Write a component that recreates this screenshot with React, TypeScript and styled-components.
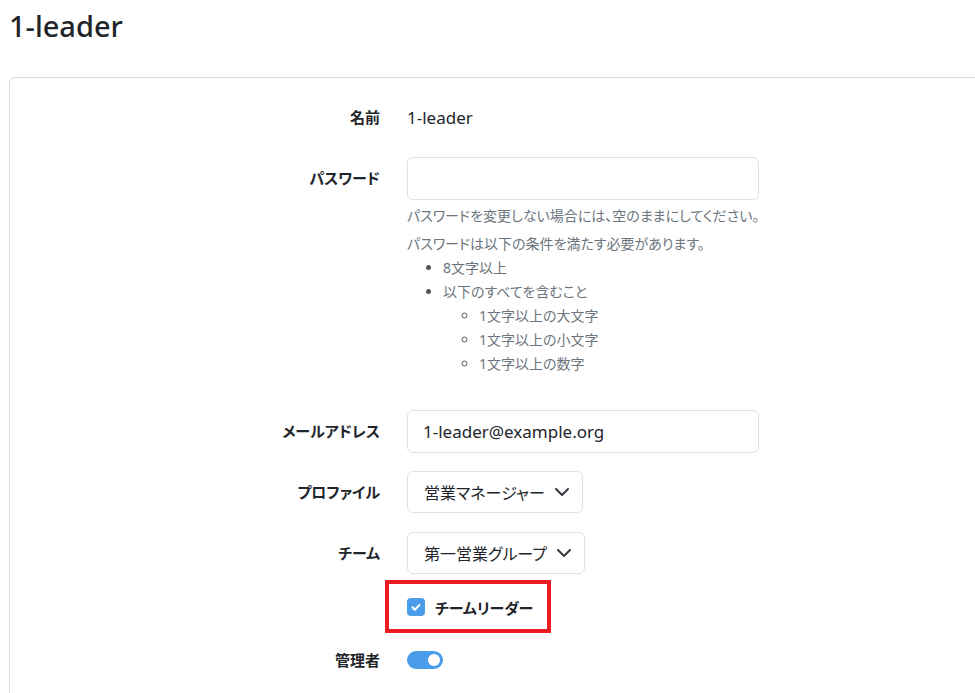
import React from 'react';
import styled, { createGlobalStyle } from 'styled-components';

const GlobalStyle = createGlobalStyle`
	html, body {
		margin: 0;
		overflow: hidden;
		background: #fff;
	}

	body {
		font-family: "Noto Sans", "Noto Sans CJK JP", sans-serif;
		font-feature-settings: "palt";
		color: #212529;
	}
`;

const Page = styled.main`
	width: 1200px;
	padding: 8px 9px;
`;

const Title = styled.h2`
	margin: 0 0 33px;
	font-size: 29px;
	font-weight: 500;
	line-height: 36px;
`;

const Card = styled.section`
	border: 1px solid #dcdcdc;
	border-radius: 6px;
	padding: 18px 0 40px;
`;

const FormRow = styled.div<{ $height?: number }>`
	display: grid;
	grid-template-columns: 370px 1fr;
	column-gap: 27px;
	align-items: start;
	margin-bottom: 18px;
	min-height: ${props => props.$height ?? 43}px;
`;

const Label = styled.div`
	text-align: right;
	font-size: 15px;
	font-weight: 700;
	line-height: 43px;
`;

const Field = styled.div`
	position: relative;
	display: flex;
	flex-direction: column;
	align-items: flex-start;
`;

const StaticValue = styled.div`
	font-size: 17px;
	line-height: 43px;
`;

const TextInput = styled.input`
	box-sizing: border-box;
	width: 352px;
	height: 43px;
	padding: 0 15px;
	border: 1px solid #dee2e6;
	border-radius: 6px;
	font-family: inherit;
	font-size: 17px;
	color: #212529;
	background: #fff;
	outline: none;
`;

const HelpText = styled.p`
	margin: 4px 0 0;
	font-size: 14px;
	line-height: 24px;
	color: #6c757d;
`;

const Rules = styled.ul<{ $nested?: boolean }>`
	margin: 0 0 ${props => (props.$nested ? 0 : 16)}px;
	padding-left: 36px;
	list-style: ${props => (props.$nested ? 'circle' : 'disc')};
	font-size: 14px;
	line-height: 24px;
	color: #6c757d;

	li::marker {
		color: #555;
	}
`;

const SelectBox = styled.div`
	box-sizing: border-box;
	display: inline-flex;
	align-items: center;
	gap: 9px;
	height: 42px;
	padding: 0 12px 0 16px;
	border: 1px solid #dee2e6;
	border-radius: 6px;
	font-size: 16px;
	background: #fff;

	svg {
		flex: 0 0 auto;
	}
`;

const CheckLabel = styled.label`
	display: flex;
	align-items: center;
	gap: 10px;
	height: 28px;
	font-size: 15px;
	font-weight: 700;
`;

const CheckBox = styled.span`
	display: inline-flex;
	align-items: center;
	justify-content: center;
	width: 18px;
	height: 18px;
	border-radius: 4px;
	background: #4a9de8;
`;

const Highlight = styled.div`
	position: absolute;
	top: -13px;
	left: -22px;
	width: 166px;
	height: 53px;
	box-sizing: border-box;
	border: 4px solid #ec1c24;
	pointer-events: none;
`;

const Switch = styled.span<{ $on: boolean }>`
	display: inline-flex;
	align-items: center;
	justify-content: ${props => (props.$on ? 'flex-end' : 'flex-start')};
	box-sizing: border-box;
	width: 36px;
	height: 18px;
	margin-top: 12px;
	padding: 0 3px;
	border-radius: 9px;
	background: ${props => (props.$on ? '#4a9de8' : '#dee2e6')};

	&::after {
		content: '';
		width: 12px;
		height: 12px;
		border-radius: 50%;
		background: #fff;
	}
`;

const Chevron = () => (
	<svg width="16" height="16" viewBox="0 0 16 16" fill="none">
		<path d="m2 5 6 6 6-6" stroke="#343a40" strokeWidth="2" strokeLinecap="round" strokeLinejoin="round" />
	</svg>
);

const Check = () => (
	<svg width="14" height="14" viewBox="0 0 20 20" fill="none">
		<path d="m5 10.5 3.5 3.5 6.5-7" stroke="#fff" strokeWidth="3" strokeLinecap="round" strokeLinejoin="round" />
	</svg>
);

const UserEdit = () => (
	<>
		<GlobalStyle />
		<Page>
			<Title>1-leader</Title>
			<Card>
				<FormRow>
					<Label>名前</Label>
					<Field>
						<StaticValue>1-leader</StaticValue>
					</Field>
				</FormRow>

				<FormRow>
					<Label>パスワード</Label>
					<Field>
						<TextInput type="password" />
						<HelpText>パスワードを変更しない場合には、空のままにしてください。</HelpText>
						<HelpText>パスワードは以下の条件を満たす必要があります。</HelpText>
						<Rules>
							<li>8文字以上</li>
							<li>
								以下のすべてを含むこと
								<Rules $nested>
									<li>1文字以上の大文字</li>
									<li>1文字以上の小文字</li>
									<li>1文字以上の数字</li>
								</Rules>
							</li>
						</Rules>
					</Field>
				</FormRow>

				<FormRow>
					<Label>メールアドレス</Label>
					<Field>
						<TextInput type="email" defaultValue="1-leader@example.org" />
					</Field>
				</FormRow>

				<FormRow>
					<Label>プロファイル</Label>
					<Field>
						<SelectBox>
							営業マネージャー
							<Chevron />
						</SelectBox>
					</Field>
				</FormRow>

				<FormRow>
					<Label>チーム</Label>
					<Field>
						<SelectBox>
							第一営業グループ
							<Chevron />
						</SelectBox>
					</Field>
				</FormRow>

				<FormRow $height={28}>
					<div />
					<Field>
						<CheckLabel>
							<CheckBox>
								<Check />
							</CheckBox>
							チームリーダー
						</CheckLabel>
						<Highlight />
					</Field>
				</FormRow>

				<FormRow>
					<Label>管理者</Label>
					<Field>
						<Switch $on />
					</Field>
				</FormRow>
			</Card>
		</Page>
	</>
);

export default UserEdit;
